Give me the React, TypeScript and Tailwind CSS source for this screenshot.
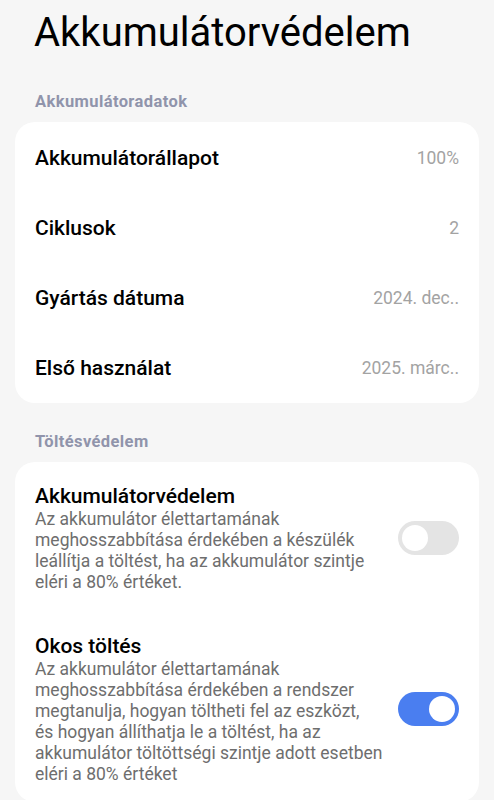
import React from 'react';

const info = [
  { label: 'Akkumulátorállapot', value: '100%' },
  { label: 'Ciklusok', value: '2' },
  { label: 'Gyártás dátuma', value: '2024. dec..' },
  { label: 'Első használat', value: '2025. márc..' },
];

const protections = [
  {
    title: 'Akkumulátorvédelem',
    lines: [
      'Az akkumulátor élettartamának',
      'meghosszabbítása érdekében a készülék',
      'leállítja a töltést, ha az akkumulátor szintje',
      'eléri a 80% értéket.',
    ],
    on: false,
  },
  {
    title: 'Okos töltés',
    lines: [
      'Az akkumulátor élettartamának',
      'meghosszabbítása érdekében a rendszer',
      'megtanulja, hogyan töltheti fel az eszközt,',
      'és hogyan állíthatja le a töltést, ha az',
      'akkumulátor töltöttségi szintje adott esetben',
      'eléri a 80% értéket',
    ],
    on: true,
  },
];

function Toggle({ on }: { on: boolean }) {
  return (
    <div
      className={
        on
          ? 'w-[61px] h-[34px] rounded-full bg-[#4a7ef0] flex items-center justify-end px-[4px] shrink-0'
          : 'w-[61px] h-[34px] rounded-full bg-[#e4e4e4] flex items-center justify-start px-[4px] shrink-0'
      }
    >
      <div className="w-[26px] h-[26px] rounded-full bg-white"></div>
    </div>
  );
}

export default function App() {
  return (
    <div className="w-[494px] h-[800px] overflow-hidden bg-[#f6f6f6] font-['Roboto',sans-serif]">
      <h1 className="pl-[34px] pt-[10px] text-[40px] leading-[46px] font-normal text-black">Akkumulátorvédelem</h1>

      <div className="pl-[35px] mt-[36px] text-[16.5px] leading-[20px] font-bold tracking-[0.4px] text-[#9094ab]">Akkumulátoradatok</div>
      <div className="mx-[15px] mt-[10px] bg-white rounded-[20px] pb-[1px]">
        {info.map(r => (
          <div key={r.label} className="h-[70px] px-[20px] pt-[3px] flex items-center justify-between">
            <span className="text-[21px] font-medium text-black">{r.label}</span>
            <span className="text-[17.5px] text-[#a3a3a3]">{r.value}</span>
          </div>
        ))}
      </div>

      <div className="pl-[35px] mt-[29px] text-[16.5px] leading-[20px] font-bold tracking-[0.4px] text-[#9094ab]">Töltésvédelem</div>
      <div className="mx-[15px] mt-[10px] bg-white rounded-[20px] pt-[21px] pb-[17px] px-[20px] flex flex-col gap-[40px]">
        {protections.map(p => (
          <div key={p.title} className="flex items-center justify-between">
            <div className="flex-1">
              <div className="text-[21px] leading-[26px] font-medium text-black">{p.title}</div>
              <div className="text-[17.5px] leading-[21px] text-[#6e6e6e]">
                {p.lines.map(l => (
                  <div key={l} className="whitespace-nowrap">{l}</div>
                ))}
              </div>
            </div>
            <Toggle on={p.on} />
          </div>
        ))}
      </div>
    </div>
  );
}
